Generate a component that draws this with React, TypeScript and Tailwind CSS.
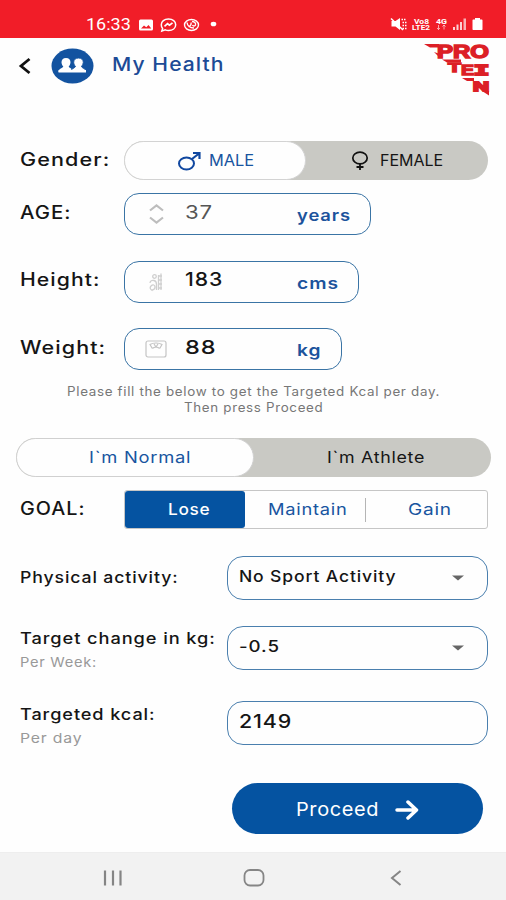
import { useLayoutEffect, useRef, useState } from "react";
import type { ReactNode } from "react";
import clsx from "clsx";

type WideTextProps = {
  width: number;
  className?: string;
  children: string;
};

// Stretches its text horizontally to fill the given width
function WideText({ width, className, children }: WideTextProps) {
  const ref = useRef<HTMLSpanElement>(null);
  const [scale, setScale] = useState(1);

  useLayoutEffect(() => {
    if (ref.current) setScale(width / ref.current.offsetWidth);
  }, [width, children]);

  return (
    <span className={clsx("block shrink-0 leading-none", className)} style={{ width }}>
      <span
        ref={ref}
        className="inline-block origin-left align-top whitespace-nowrap"
        style={{ transform: `scaleX(${scale})` }}
      >
        {children}
      </span>
    </span>
  );
}

function StatusBar() {
  return (
    <div className="flex h-[38px] bg-[#f11d28] pt-[10px] text-white">
      <div className="flex h-7 items-center pt-[2px] pl-[86px]">
        <WideText width={45} className="font-[Roboto] text-[16px]">
          16:33
        </WideText>
        <svg className="ml-2" width="80" height="18" viewBox="0 0 80 18" fill="none">
          <rect x="0" y="3.500" width="14" height="11" rx="1.500" fill="white" />
          <path d="M2 12.500l3-3 2.300 1.800L9.500 9l2.800 3.500z" fill="#f11d28" />
          <path
            d="M29.500 3c4.200 0 7.200 2.500 7.200 5.800s-3 5.700-7.200 5.700c-1.100 0-2.200-.2-3.200-.6L22.800 15l.8-2.600a5 5 0 0 1-1.300-3.600C22.300 5.500 25.300 3 29.500 3z"
            stroke="white"
            strokeWidth="1.500"
          />
          <path d="M25.500 10.300l3-2.600 2 1.500 3-2.300" stroke="white" strokeWidth="1.700" />
          <ellipse cx="52.500" cy="9" rx="7" ry="5.500" stroke="white" strokeWidth="1.400" />
          <path
            d="M48 6.500c.5 3.500 3 5.500 7 5.500M49.500 10.500c2-.5 3-2 2.500-4M53 5.500c2.500 0 4 1.500 3.500 3.500-.5 1.300-2.500 1.300-3 0"
            stroke="white"
            strokeWidth="1.400"
          />
          <ellipse cx="74.500" cy="8" rx="2.800" ry="2.300" fill="white" />
        </svg>
      </div>
      <div className="ml-auto flex h-7 items-center pr-[23px]">
        <svg width="93" height="18" viewBox="0 0 93 18" fill="white">
          <path d="M1.500 6h4L10 3v12L5.500 11.500h-4z" />
          <path d="M1 3.500L13 15" stroke="white" strokeWidth="1.500" />
          <path
            d="M11.500 4.500h5M12.500 7.500h4M12.500 10.500h4M12.500 13.500h4"
            stroke="white"
            strokeWidth="1.500"
            strokeDasharray="1.500 1"
          />
          <g className="font-[Roboto] font-bold" fontSize="7">
            <text x="24" y="8.500" textLength="15" lengthAdjust="spacingAndGlyphs">Vo8</text>
            <text x="22" y="15" textLength="18" lengthAdjust="spacingAndGlyphs">LTE2</text>
            <text x="46" y="8.500" textLength="11" lengthAdjust="spacingAndGlyphs">4G</text>
          </g>
          <g stroke="white" opacity=".6">
            <path d="M48.500 10v4.500M47 13l1.500 1.500L50 13M54 14.500V10M52.500 11.500L54 10l1.500 1.500" fill="none" />
          </g>
          <rect x="63" y="12" width="2" height="3" opacity=".8" />
          <rect x="66.500" y="9.500" width="2" height="5.500" opacity=".8" />
          <rect x="70" y="7" width="2" height="8" opacity=".8" />
          <rect x="73.500" y="3.500" width="2.500" height="11.500" opacity=".65" />
          <path d="M85 3h5v1.500h1.500c.7 0 1 .4 1 1V14c0 .7-.3 1-1 1h-8c-.7 0-1-.3-1-1V5.500c0-.6.3-1 1-1H85z" />
        </svg>
      </div>
    </div>
  );
}

function ProteinLogo() {
  return (
    <svg width="68" height="54" viewBox="0 0 68 54" fill="#dc1f26">
      <path d="M1 2h15v3.500H7z" />
      <path d="M11 10l6 2v4z" />
      <path d="M19 17.500h19v3H24z" />
      <path d="M39 36h12v3h-7z" />
      <path d="M59 49h7v4.500z" />
      <g className="font-['Liberation_Sans'] font-bold" stroke="#dc1f26">
        <text x="14" y="16" fontSize="18" strokeWidth="1.500" textLength="52" lengthAdjust="spacingAndGlyphs">PRO</text>
        <text x="25" y="29.500" fontSize="13" strokeWidth="1.300" textLength="13" lengthAdjust="spacingAndGlyphs">T</text>
        <text x="38" y="33" fontSize="14" strokeWidth="1.300" textLength="13" lengthAdjust="spacingAndGlyphs">E</text>
        <text x="51" y="33" fontSize="15" strokeWidth="2" className="font-['Liberation_Mono']" textLength="15" lengthAdjust="spacingAndGlyphs">I</text>
        <text x="50" y="48.500" fontSize="13" strokeWidth="1.800" textLength="16" lengthAdjust="spacingAndGlyphs">N</text>
      </g>
    </svg>
  );
}

function Header() {
  return (
    <header className="flex h-[103px] items-start pl-[17px]">
      <svg className="mt-[19px]" width="16" height="18" viewBox="0 0 16 18" fill="none">
        <path d="M12.500 2L4 9l8.500 7" stroke="#111" strokeWidth="2.800" />
      </svg>
      <svg className="mt-[10px] ml-[18px]" width="43" height="36" viewBox="0 0 43 36">
        <ellipse cx="21.500" cy="18" rx="21" ry="17.500" fill="#1353a0" />
        <g fill="white">
          <path d="M15 10c3 0 4.700 2 4.500 4.500-.1 1.500-.8 3-1.800 4 .2 1.500 3.800 1.600 4.300 5.500H7.500c.2-3.800 4.500-4 4.800-5.500-1-1-1.700-2.500-1.800-4C10.400 12 12 10 15 10z" />
          <path
            d="M27.500 10c3.200 0 5 2 4.800 4.500-.1 1.500-.8 3-1.800 4 .3 1.800 4.500 1.600 4.700 5.500H19.500c.3-3.700 4.700-3.900 5-5.500-1-1-1.700-2.500-1.800-4-.2-2.500 1.600-4.500 4.800-4.500z"
            stroke="#1353a0"
            strokeWidth="1"
          />
          <rect x="7.500" y="22" width="27.500" height="2.500" />
        </g>
      </svg>
      <WideText width={113} className="mt-[17px] ml-[18px] text-[18.500px] font-medium tracking-[.05em] text-[#1c4b96]">
        My Health
      </WideText>
      <div className="mt-1 mr-[15px] ml-auto">
        <ProteinLogo />
      </div>
    </header>
  );
}

type MeasureRowProps = {
  label: string;
  labelWidth: number;
  value: string;
  valueWidth: number;
  unit: string;
  unitWidth: number;
  boxClass: string;
  valueClass?: string;
  icon: ReactNode;
};

function MeasureRow(props: MeasureRowProps) {
  return (
    <div className="flex h-[42px] items-center pl-5">
      <div className="w-[104px] pb-[3px]">
        <WideText width={props.labelWidth} className="text-[18px] font-medium tracking-[.05em]">
          {props.label}
        </WideText>
      </div>
      <div className={clsx("flex h-[42px] items-center rounded-[15px] border-[1.5px] border-[#3a74a5] pl-5", props.boxClass)}>
        <div className="w-10">{props.icon}</div>
        <div className="w-28 pb-[4px]">
          <WideText width={props.valueWidth} className={clsx("text-[19px] tracking-[.04em]", props.valueClass)}>
            {props.value}
          </WideText>
        </div>
        <WideText width={props.unitWidth} className="pt-[2px] text-[16px] font-semibold tracking-[.05em] text-[#1c539c]">
          {props.unit}
        </WideText>
      </div>
    </div>
  );
}

function SelectArrow() {
  return (
    <svg className="mr-[23px] ml-auto" width="12" height="6" viewBox="0 0 12 6">
      <path d="M0 .5h12L6 5.500z" fill="#666" />
    </svg>
  );
}

function Form() {
  return (
    <main className="flex-1 text-[#151515]">
      <div className="flex h-[39px] items-center pl-5">
        <div className="w-[104px] pb-[2px]">
          <WideText width={90} className="text-[18px] font-medium tracking-[.05em]">Gender:</WideText>
        </div>
        <div className="flex h-[39px] w-[364px] overflow-hidden rounded-full bg-[#c9c9c4]">
          <div className="flex w-[182px] items-center rounded-full border border-[#d3d3d3] bg-[#fefefe] pl-[52px] text-[#1855a0]">
            <svg width="26" height="20" viewBox="0 0 26 20" fill="none" stroke="#1148a0">
              <ellipse cx="9.500" cy="12.500" rx="7.500" ry="6" strokeWidth="2" />
              <path d="M15 8L22 2.500M16 2h6.500v6" strokeWidth="2.200" />
            </svg>
            <WideText width={45} className="ml-[6px] pb-px text-[16px]">MALE</WideText>
          </div>
          <div className="flex items-center pl-[45px]">
            <svg width="18" height="22" viewBox="0 0 18 22" fill="none" stroke="#111">
              <ellipse cx="9" cy="8" rx="7.200" ry="5.800" strokeWidth="1.700" />
              <path d="M9 14v6M5.500 17h7" strokeWidth="1.800" />
            </svg>
            <WideText width={63} className="ml-[11px] pb-px text-[16px]">FEMALE</WideText>
          </div>
        </div>
      </div>

      <div className="mt-[13px] flex flex-col gap-[25.500px]">
        <MeasureRow
          label="AGE:"
          labelWidth={51}
          value="37"
          valueWidth={28}
          valueClass="text-[#555]"
          unit="years"
          unitWidth={54}
          boxClass="w-[247px]"
          icon={
            <svg className="ml-[3px]" width="17" height="22" viewBox="0 0 17 22" fill="none" stroke="#bdbdbd" strokeWidth="2.200">
              <path d="M2 7.500L8.500 2.500 15 7.500M2 14.500l6.500 5 6.500-5" />
            </svg>
          }
        />
        <MeasureRow
          label="Height:"
          labelWidth={80}
          value="183"
          valueWidth={38}
          valueClass="font-medium"
          unit="cms"
          unitWidth={42}
          boxClass="w-[235px]"
          icon={
            <svg className="ml-[3px]" width="16" height="20" viewBox="0 0 16 20" fill="none" stroke="#cfcfcf" strokeWidth="1.300">
              <circle cx="6.500" cy="4.500" r="1.800" />
              <path d="M3 18c3 0 4-1 4-3s-2-3-4-1c-1.500 1.500-1 4 2 4.500M2 11c0-2 2-3 4-2.500s2.500 2 2.500 4V18M10.500 3v15M13 1.500V18M11 4h3M11 8h3M11 12h3M11 16h3" />
            </svg>
          }
        />
        <MeasureRow
          label="Weight:"
          labelWidth={86}
          value="88"
          valueWidth={31}
          valueClass="font-medium"
          unit="kg"
          unitWidth={24}
          boxClass="w-[218px]"
          icon={
            <svg width="22" height="18" viewBox="0 0 22 18" fill="none" stroke="#c4c4c4" strokeWidth="1.200">
              <rect x="1" y="1" width="20" height="16" rx="2" />
              <path d="M5 4.500c3-2 9-2 12 0l-2 3.500c-2 .5-2-1-4-1s-2 1.500-4 1zM9 4l2 3 2-3" />
            </svg>
          }
        />
      </div>

      <div className="mt-[15.500px] flex flex-col items-center gap-[3.500px] text-[12.500px] tracking-[.05em] text-[#777]">
        <WideText width={373}>Please fill the below to get the Targeted Kcal per day.</WideText>
        <WideText width={139}>Then press Proceed</WideText>
      </div>

      <div className="mx-auto mt-[24px] flex h-[39px] w-[475px] overflow-hidden rounded-full bg-[#c9c9c4]">
        <div className="flex w-[238px] items-center rounded-full border border-[#d0d0d0] bg-[#fefefe] pb-[2px] pl-[72px]">
          <WideText width={102} className="text-[16px] tracking-[.04em] text-[#1855a0]">I`m Normal</WideText>
        </div>
        <div className="flex items-center pb-[2px] pl-[73px]">
          <WideText width={98} className="text-[16px] tracking-[.04em]">I`m Athlete</WideText>
        </div>
      </div>

      <div className="mt-[13px] flex h-[39px] items-center pl-5">
        <div className="w-[104px] pb-[2px]">
          <WideText width={66} className="text-[18px] font-medium tracking-[.05em]">GOAL:</WideText>
        </div>
        <div className="flex h-[39px] w-[364px] items-center rounded-[3px] border border-[#c6c6c6] text-[16px] tracking-[.04em] text-[#1855a0]">
          <div className="flex h-[37px] w-[120px] justify-center rounded-[3px] bg-[#0553a1] pt-[10px] pl-2 text-white">
            <WideText width={42} className="font-medium">Lose</WideText>
          </div>
          <div className="flex h-6 w-[121px] justify-center border-r border-[#b5b5b5] pt-[3px] pl-[6px]">
            <WideText width={80}>Maintain</WideText>
          </div>
          <div className="flex h-6 flex-1 justify-center pt-[3px] pl-[6px]">
            <WideText width={44}>Gain</WideText>
          </div>
        </div>
      </div>

      <div className="mt-[27px] flex h-11 items-center pl-5">
        <div className="w-[207px] pb-[3px]">
          <WideText width={159} className="text-[16px] font-medium tracking-[.05em]">Physical activity:</WideText>
        </div>
        <div className="flex h-11 w-[261px] items-center rounded-[16px] border-[1.5px] border-[#4a7fae] pl-[11px]">
          <WideText width={157} className="pb-[3px] text-[15.500px] font-medium tracking-[.05em]">No Sport Activity</WideText>
          <SelectArrow />
        </div>
      </div>

      <div className="mt-[26px] flex h-11 pl-5">
        <div className="flex w-[207px] flex-col gap-[10px] pt-[4px]">
          <WideText width={196} className="text-[16px] font-medium tracking-[.05em]">Target change in kg:</WideText>
          <WideText width={77} className="text-[13.500px] tracking-[.05em] text-[#999]">Per Week:</WideText>
        </div>
        <div className="flex h-11 w-[261px] items-center rounded-[16px] border-[1.5px] border-[#4a7fae] pl-[11px]">
          <WideText width={41} className="pb-[3px] text-[15.500px] font-medium tracking-[.05em]">-0.5</WideText>
          <SelectArrow />
        </div>
      </div>

      <div className="mt-[31px] flex h-11 pl-5">
        <div className="flex w-[207px] flex-col gap-[10px] pt-[5px]">
          <WideText width={136} className="text-[16px] font-medium tracking-[.05em]">Targeted kcal:</WideText>
          <WideText width={62} className="text-[13.500px] tracking-[.05em] text-[#999]">Per day</WideText>
        </div>
        <div className="flex h-11 w-[261px] items-center rounded-[16px] border-[1.5px] border-[#4a7fae] pl-[11px]">
          <WideText width={53} className="pb-1 text-[19px] font-medium tracking-[.04em]">2149</WideText>
        </div>
      </div>

      <button className="mt-[38px] ml-[232px] flex h-[51px] w-[251px] items-center rounded-full bg-[#0553a1] pl-[64px] text-white">
        <WideText width={83} className="pt-[2px] text-left text-[19px] tracking-[.03em]">Proceed</WideText>
        <svg className="mt-[2px] ml-[16px]" width="24" height="20" viewBox="0 0 24 20" fill="none" stroke="white" strokeWidth="3.500">
          <path d="M2 10h19M13 2l8.500 8L13 18" strokeLinecap="round" strokeLinejoin="round" />
        </svg>
      </button>
    </main>
  );
}

function NavBar() {
  return (
    <nav className="flex h-12 items-center border-t border-[#eeeeee] bg-[#f2f2f2] pt-[3px] pl-[102px]">
      <svg width="22" height="18" viewBox="0 0 22 18" stroke="#858585" strokeWidth="2.200">
        <path d="M3 1.500v15M11 1.500v15M18.500 1.500v15" />
      </svg>
      <svg className="ml-[119px]" width="22" height="18" viewBox="0 0 22 18" fill="none" stroke="#858585" strokeWidth="1.800">
        <rect x="1.500" y="1" width="19" height="15.500" rx="5.500" />
      </svg>
      <svg className="ml-[124px]" width="14" height="18" viewBox="0 0 14 18" fill="none" stroke="#858585" strokeWidth="2">
        <path d="M11.500 2L3 9l8.500 7" />
      </svg>
    </nav>
  );
}

export default function App() {
  return (
    <div className="flex h-[900px] w-[506px] flex-col overflow-hidden bg-[#fefefe] font-[Inter,sans-serif]">
      <StatusBar />
      <Header />
      <Form />
      <NavBar />
    </div>
  );
}
